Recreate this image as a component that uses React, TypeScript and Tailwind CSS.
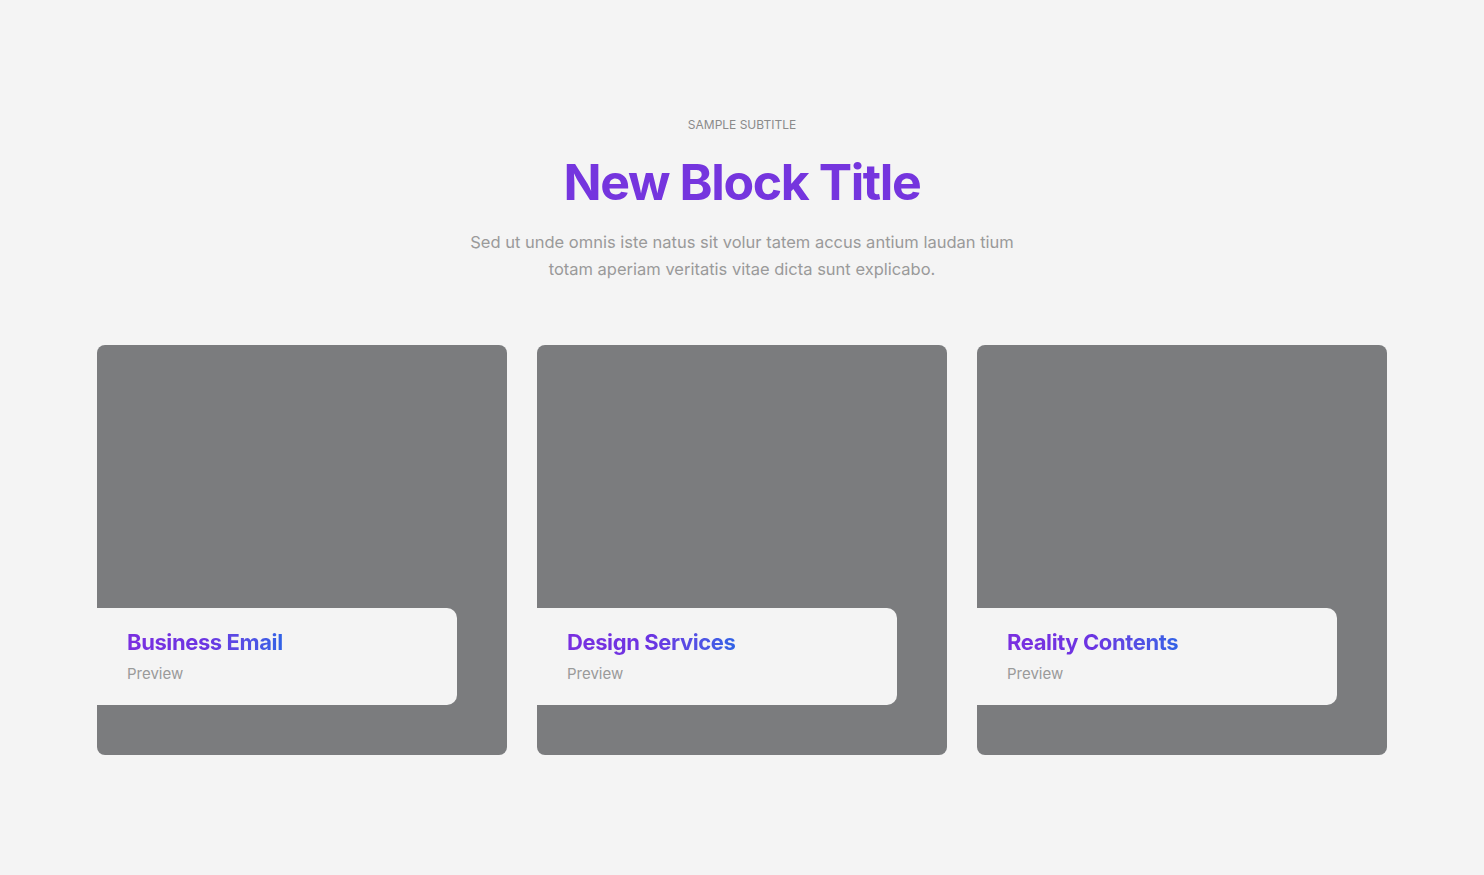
const cards = [
  { title: "Business Email", sub: "Preview" },
  { title: "Design Services", sub: "Preview" },
  { title: "Reality Contents", sub: "Preview" },
];

const Card = ({ title, sub }: { title: string; sub: string }) => {
  return (
    <div className="flex h-[410px] w-[410px] flex-col justify-end rounded-lg bg-[#7b7c7e] pb-[50px]">
      <div className="flex h-[97px] w-[360px] flex-col rounded-r-[10px] bg-[#f4f4f4] pl-[30px] pt-[20px]">
        <h3 className="w-fit bg-gradient-to-r from-[#7a2fe0] via-[#6b34e2] to-[#2f62e6] bg-clip-text text-[22px] font-bold leading-[28px] tracking-[-0.4px] text-transparent">
          {title}
        </h3>
        <p className="mt-[8px] text-[15px] leading-[20px] text-[#9a9a9a]">{sub}</p>
      </div>
    </div>
  );
};

export default function App() {
  return (
    <div
      className="min-h-[875px] w-full bg-[#f4f4f4]"
      style={{ fontFamily: "Inter, 'Noto Sans', sans-serif" }}
    >
      <div className="flex flex-col items-center pt-[117px]">
        <p className="text-[12px] leading-[16px] text-[#8a8a8a]">SAMPLE SUBTITLE</p>
        <h1 className="mt-[19px] text-[50px] font-bold leading-[60px] tracking-[-1.4px] text-[#7535de]">
          New Block Title
        </h1>
        <p className="mt-[17px] max-w-[570px] text-center text-[16.5px] leading-[27px] text-[#9a9a9a]">
          Sed ut unde omnis iste natus sit volur tatem accus antium laudan tium totam aperiam
          veritatis vitae dicta sunt explicabo.
        </p>
      </div>
      <div className="mt-[62px] flex justify-center gap-[30px]">
        {cards.map((c) => (
          <Card key={c.title} title={c.title} sub={c.sub} />
        ))}
      </div>
    </div>
  );
}
